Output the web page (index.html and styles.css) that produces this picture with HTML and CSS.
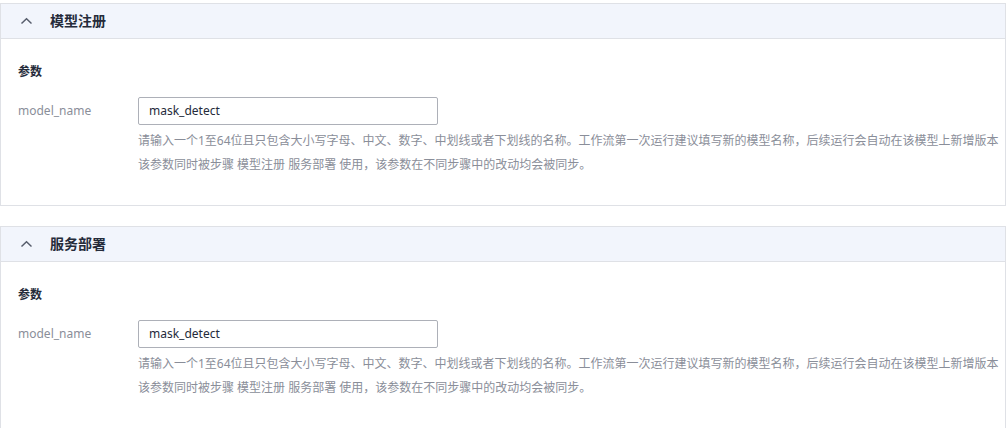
FILE: index.html
```html
<!DOCTYPE html>
<html lang="zh-CN">
<head>
<meta charset="utf-8">
<link rel="stylesheet" href="styles.css">
</head>
<body>
<div class="page">
  <section class="card">
    <div class="card-header">
      <svg class="chevron" width="13" height="12" viewBox="0 0 13 12"><path d="M1.5 8.5 L6.5 3.8 L11.5 8.5" fill="none" stroke="#575d6c" stroke-width="1.5"/></svg>
      <span class="card-title">模型注册</span>
    </div>
    <div class="card-body">
      <div class="section-label">参数</div>
      <div class="form-row">
        <div class="form-label">model_name</div>
        <div class="form-control">
          <div class="input">mask_detect</div>
          <div class="hint">
            <div class="hint-line">请输入一个1至64位且只包含大小写字母、中文、数字、中划线或者下划线的名称。工作流第一次运行建议填写新的模型名称，后续运行会自动在该模型上新增版本</div>
            <div class="hint-line">该参数同时被步骤 模型注册 服务部署 使用，该参数在不同步骤中的改动均会被同步。</div>
          </div>
        </div>
      </div>
    </div>
  </section>
  <section class="card">
    <div class="card-header">
      <svg class="chevron" width="13" height="12" viewBox="0 0 13 12"><path d="M1.5 8.5 L6.5 3.8 L11.5 8.5" fill="none" stroke="#575d6c" stroke-width="1.5"/></svg>
      <span class="card-title">服务部署</span>
    </div>
    <div class="card-body">
      <div class="section-label">参数</div>
      <div class="form-row">
        <div class="form-label">model_name</div>
        <div class="form-control">
          <div class="input">mask_detect</div>
          <div class="hint">
            <div class="hint-line">请输入一个1至64位且只包含大小写字母、中文、数字、中划线或者下划线的名称。工作流第一次运行建议填写新的模型名称，后续运行会自动在该模型上新增版本</div>
            <div class="hint-line">该参数同时被步骤 模型注册 服务部署 使用，该参数在不同步骤中的改动均会被同步。</div>
          </div>
        </div>
      </div>
    </div>
  </section>
</div>
</body>
</html>
```

FILE: styles.css
```css
html, body {
  margin: 0;
  padding: 0;
  background: #ffffff;
  overflow: hidden;
}
body {
  font-family: "Noto Sans", "Noto Sans CJK SC", sans-serif;
  color: #252b3a;
}
.page {
  padding: 3px 0 0 0;
  display: flex;
  flex-direction: column;
  gap: 20px;
}
.card {
  width: 1004px;
  border: 1px solid #dfe1e6;
  background: #fff;
}
.card-header {
  height: 34px;
  background: #f2f5fc;
  border-bottom: 1px solid #dfe1e6;
  display: flex;
  align-items: center;
  padding-left: 19px;
}
.chevron {
  display: block;
  margin-right: 17px;
}
.card-title {
  font-size: 14px;
  font-weight: 700;
  color: #252b3a;
  line-height: 20px;
}
.card-body {
  padding: 24px 0 28px 17px;
}
.section-label {
  font-size: 12px;
  font-weight: 700;
  line-height: 18px;
  color: #252b3a;
}
.form-row {
  margin-top: 16px;
  display: flex;
  align-items: flex-start;
}
.form-label {
  width: 120px;
  height: 28px;
  line-height: 28px;
  font-size: 12px;
  color: #8a8e99;
}
.form-control {
  display: flex;
  flex-direction: column;
}
.input {
  width: 288px;
  height: 26px;
  line-height: 26px;
  border: 1px solid #adb0b8;
  border-radius: 2px;
  padding-left: 10px;
  font-size: 12px;
  color: #252b3a;
}
.hint {
  padding-top: 4px;
}
.hint-line {
  font-size: 12px;
  line-height: 24px;
  color: #8a8e99;
  white-space: nowrap;
}
```
